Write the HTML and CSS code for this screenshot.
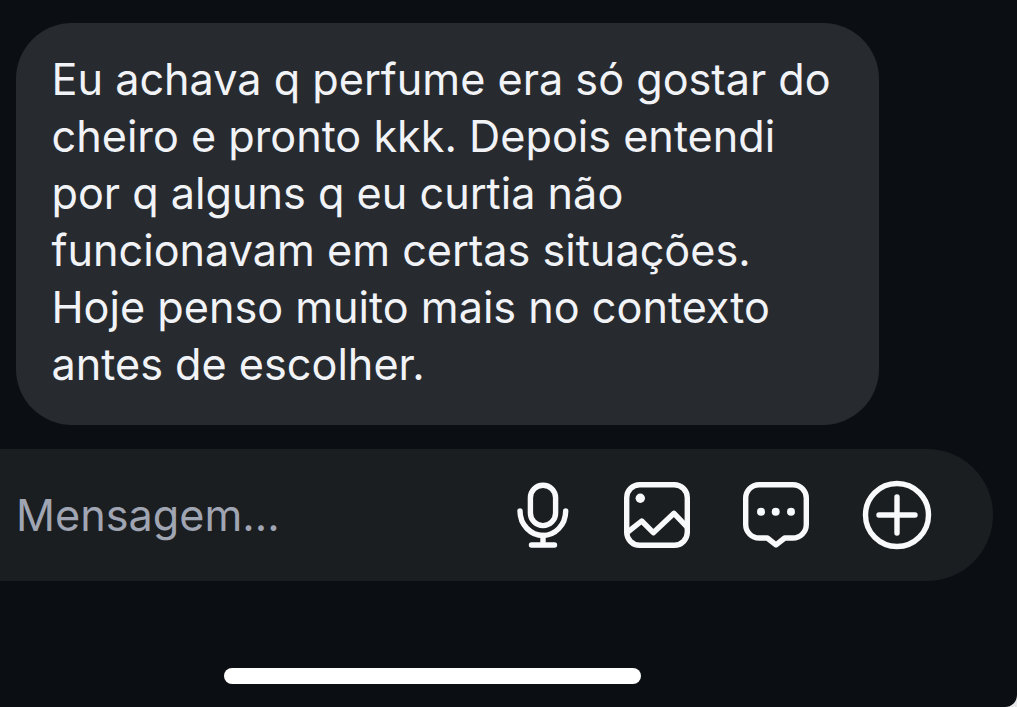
FILE: index.html
```html
<!doctype html>
<html lang="pt-BR">

<head>
	<meta charset="utf-8">
	<title>Mensagem</title>
	<meta name="viewport" content="width=device-width, initial-scale=1"/>
	<link rel="stylesheet" href="styles.css">
</head>

<body>
	<div class="screen">
		<div class="bubble">Eu achava q perfume era só gostar do<br>cheiro e pronto kkk. Depois entendi<br>por q alguns q eu curtia não<br>funcionavam em certas situações.<br>Hoje penso muito mais no contexto<br>antes de escolher.</div>

		<div class="composer">
			<div class="placeholder">Mensagem...</div>
			<div class="actions">
				<svg class="icon mic" width="52" height="66" viewBox="0 0 52 66" aria-hidden="true">
					<rect x="13.4" y="3.2" width="25.2" height="40.4" rx="12.6"/>
					<path d="M3 29C3 43 14 53.5 26 53.5S48.7 43 48.7 29"/>
					<path d="M26 53.5V63M14.5 63H37.5"/>
				</svg>
				<svg class="icon" width="66" height="66" viewBox="0 0 66 66" aria-hidden="true">
					<rect x="2.7" y="2.7" width="60.6" height="60.6" rx="13"/>
					<circle class="dot" cx="16.3" cy="16.3" r="4.7"/>
					<path d="M4.3 49.7L17.7 39L29.3 50.7L50 31.3L62.7 44.7"/>
				</svg>
				<svg class="icon" width="66" height="66" viewBox="0 0 66 66" aria-hidden="true">
					<path d="M16 2.7H50A13.3 13.3 0 0 1 63.3 16V42.5A13.5 13.5 0 0 1 49.8 56H41.7L33 62.8L24.3 56H16.2A13.5 13.5 0 0 1 2.7 42.5V16A13.3 13.3 0 0 1 16 2.7Z"/>
					<circle class="dot" cx="18" cy="29.7" r="4"/>
					<circle class="dot" cx="32.7" cy="29.7" r="4"/>
					<circle class="dot" cx="48" cy="29.7" r="4"/>
				</svg>
				<svg class="icon plus" width="70" height="70" viewBox="0 0 70 70" aria-hidden="true">
					<circle cx="35" cy="35" r="31.5"/>
					<path d="M35 17V53M17 35H53"/>
				</svg>
			</div>
		</div>

		<div class="home-indicator"></div>
	</div>
</body></html>
```

FILE: styles.css
```css
body {
	margin: 0;
	background-color: #e8e8ea;
	font-family: Inter, "Liberation Sans", sans-serif;
}

.screen {
	display: flex;
	flex-direction: column;
	align-items: flex-start;
	box-sizing: border-box;
	height: 707px;
	padding-top: 23px;
	background-color: #0b0f13;
	border-bottom-right-radius: 12px;
	overflow: hidden;
}

.bubble {
	box-sizing: border-box;
	width: 863px;
	margin-left: 16px;
	padding: 28px 35.5px 32px;
	border-radius: 56px;
	background-color: #272b2f;
	color: #f1f3f7;
	font-size: 43.2px;
	font-weight: 370;
	line-height: 57px;
	white-space: nowrap;
}

.composer {
	display: flex;
	align-items: center;
	justify-content: space-between;
	box-sizing: border-box;
	width: 993px;
	height: 132px;
	margin-top: 24px;
	padding: 0 61px 0 16px;
	border-radius: 0 66px 66px 0;
	background-color: #1b1e20;
}

.placeholder {
	color: #a0a5b3;
	font-size: 43.2px;
	font-weight: 370;
}

.actions {
	display: flex;
	align-items: center;
	gap: 53px;
}

.icon {
	display: block;
	fill: none;
	stroke: #f8f9fb;
	stroke-width: 5.4;
	stroke-linecap: round;
	stroke-linejoin: round;
}

.icon .dot {
	fill: #f8f9fb;
	stroke: none;
}

.mic {
	margin-right: 2px;
}

.home-indicator {
	width: 417px;
	height: 16px;
	margin-top: 87px;
	margin-left: 224px;
	border-radius: 8px;
	background-color: #fff;
}
```
